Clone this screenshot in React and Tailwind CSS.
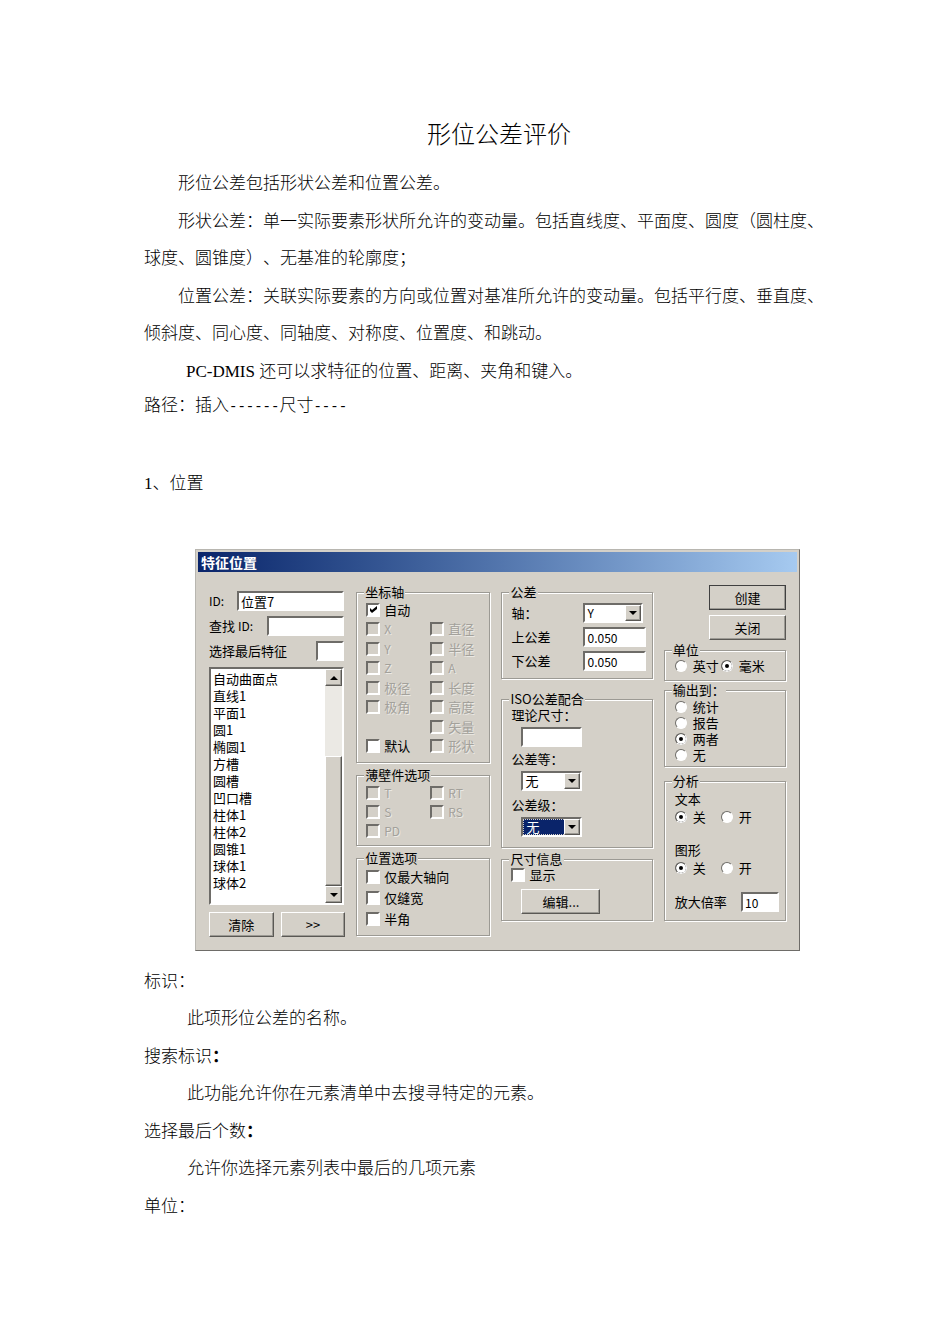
import { clsx } from 'clsx';

const SUNKEN = 'border-2 border-t-[#6e6c68] border-l-[#6e6c68] border-b-white border-r-white';
const RAISED = 'border border-t-white border-l-white border-b-[#5a5854] border-r-[#5a5854] shadow-[inset_-1px_-1px_0_#9c9a94]';

const FEATURES = [
  '自动曲面点', '直线1', '平面1', '圆1', '椭圆1', '方槽', '圆槽', '凹口槽',
  '柱体1', '柱体2', '圆锥1', '球体1', '球体2',
];

const AXES = [
  ['X', '直径'],
  ['Y', '半径'],
  ['Z', 'A'],
  ['极径', '长度'],
  ['极角', '高度'],
  [null, '矢量'],
];

const NOTES = [
  { term: '标识', text: '此项形位公差的名称。' },
  { term: '搜索标识', text: '此功能允许你在元素清单中去搜寻特定的元素。', bold: true },
  { term: '选择最后个数', text: '允许你选择元素列表中最后的几项元素', bold: true },
  { term: '单位' },
];

export default function App() {
  return (
    <main className="min-h-screen bg-white pt-[117px] pr-[126px] pb-[120px] pl-36 text-[17px] leading-[37px] font-light text-black font-['Liberation_Serif','Noto_Sans_CJK_SC',serif] [text-spacing-trim:space-all]">
      <h1 className="pl-[30px] text-center text-2xl leading-[37px]">形位公差评价</h1>

      <div className="mt-[11px] flex flex-col gap-px">
        <p className="indent-[2em]">形位公差包括形状公差和位置公差。</p>
        <p className="indent-[2em]">
          形状公差：单一实际要素形状所允许的变动量。包括直线度、平面度、圆度（圆柱度、球度、圆锥度）、无基准的轮廓度；
        </p>
        <p className="indent-[2em]">
          位置公差：关联实际要素的方向或位置对基准所允许的变动量。包括平行度、垂直度、倾斜度、同心度、同轴度、对称度、位置度、和跳动。
        </p>
        <p className="pl-[42px]">PC-DMIS 还可以求特征的位置、距离、夹角和键入。</p>
      </div>
      <p className="leading-8">
        路径：插入<Dashes>------</Dashes>尺寸<Dashes>----</Dashes>
      </p>

      <h2 className="mt-[43px]">1、位置</h2>

      <PositionDialog />

      <dl className="mt-3 flex flex-col gap-px">
        {NOTES.map((note) => (
          <div key={note.term}>
            <dt>
              {note.term}
              <span className={clsx(note.bold && 'font-bold')}>：</span>
            </dt>
            {note.text && <dd className="pl-[43px]">{note.text}</dd>}
          </div>
        ))}
      </dl>
    </main>
  );
}

function Dashes({ children }) {
  return <span className="text-sm font-['Liberation_Mono',monospace]">{children}</span>;
}

function PositionDialog() {
  return (
    <section
      aria-labelledby="dialog-title"
      className="mt-[47px] mr-6 ml-[51px] border border-t-[#b8b6b0] border-l-[#b8b6b0] border-r-[#6e6c68] border-b-[#6e6c68] bg-[#d4d0c8] p-0.5 text-[13px] leading-4 font-normal font-['Noto_Sans_CJK_SC',sans-serif]"
    >
      <h3
        id="dialog-title"
        className="bg-linear-to-r from-[#0a246a] to-[#a6caf0] px-[3px] text-sm leading-5 font-bold text-white"
      >
        特征位置
      </h3>
      <form
        className="grid grid-cols-[136fr_134fr_151fr_122fr] gap-[11px] px-[11px] pt-3 pb-[11px]"
        onSubmit={(e) => e.preventDefault()}
      >
        <FeatureColumn />
        <OptionsColumn />
        <ToleranceColumn />
        <OutputColumn />
      </form>
    </section>
  );
}

// 特征列表
function FeatureColumn() {
  return (
    <div className="flex min-w-0 flex-col pt-[7px]">
      <div className="mr-px flex flex-col gap-[5px]">
        <div className="flex items-center">
          <label htmlFor="fid" className="w-7 text-xs">ID:</label>
          <TextBox id="fid" defaultValue="位置7" className="flex-1 text-[13px]" />
        </div>
        <div className="flex items-center">
          <label htmlFor="find" className="w-[58px]">
            查找 <span className="text-xs">ID:</span>
          </label>
          <TextBox id="find" className="flex-1" />
        </div>
        <div className="flex items-center justify-between">
          <label htmlFor="last">选择最后特征</label>
          <TextBox id="last" className="w-7" />
        </div>
      </div>

      <div className={clsx('mt-[6px] mr-px flex bg-white', SUNKEN)}>
        <select
          size={13}
          aria-label="特征列表"
          className="h-[234px] min-w-0 flex-1 appearance-none overflow-hidden border-0 bg-white p-0 outline-none [scrollbar-width:none]"
        >
          {FEATURES.map((name) => (
            <option key={name} className="h-[17px] min-h-0 p-0 px-0.5 leading-4">{name}</option>
          ))}
        </select>
        <div className="flex w-[17px] flex-col bg-[#ebe9e4]">
          <button type="button" aria-label="向上" className={clsx('grid h-[17px] place-items-center bg-[#d4d0c8]', RAISED)}>
            <Arrow up />
          </button>
          <div className="flex-1" />
          <div className={clsx('h-[130px] bg-[#d4d0c8]', RAISED)} />
          <button type="button" aria-label="向下" className={clsx('grid h-[17px] place-items-center bg-[#d4d0c8]', RAISED)}>
            <Arrow />
          </button>
        </div>
      </div>

      <div className="mt-[7px] grid grid-cols-2 gap-[7px]">
        <PushButton>清除</PushButton>
        <PushButton>&gt;&gt;</PushButton>
      </div>
    </div>
  );
}

function OptionsColumn() {
  return (
    <div className="flex min-w-0 flex-col gap-1">
      <Group title="坐标轴">
        <div className="grid h-[156px] auto-rows-fr grid-cols-[64px_1fr] items-center">
          <CheckBox label="自动" checked className="col-span-2" />
          {AXES.map(([left, right]) => [
            left ? <CheckBox key={left} label={left} disabled /> : <span key="empty" />,
            <CheckBox key={right} label={right} disabled />,
          ])}
          <CheckBox label="默认" />
          <CheckBox label="形状" disabled />
        </div>
        <div className="h-[6px]" />
      </Group>
      <Group title="薄壁件选项">
        <div className="grid h-[58px] auto-rows-fr grid-cols-[64px_1fr] items-center">
          <CheckBox label="T" disabled />
          <CheckBox label="RT" disabled />
          <CheckBox label="S" disabled />
          <CheckBox label="RS" disabled />
          <CheckBox label="PD" disabled />
        </div>
        <div className="h-1" />
      </Group>
      <Group title="位置选项">
        <div className="grid h-[63px] auto-rows-fr items-center">
          <CheckBox label="仅最大轴向" />
          <CheckBox label="仅缝宽" />
          <CheckBox label="半角" />
        </div>
        <div className="h-[6px]" />
      </Group>
    </div>
  );
}

function ToleranceColumn() {
  return (
    <div className="flex min-w-0 flex-col">
      <Group title="公差">
        <div className="flex flex-col gap-1 pt-[3px] pb-[7px]">
          <Field id="axis" label="轴：">
            <ComboBox id="axis" value="Y" className="mr-[3px] flex-1 text-xs" />
          </Field>
          <Field id="upper" label="上公差">
            <TextBox id="upper" defaultValue="0.050" className="flex-1" />
          </Field>
          <Field id="lower" label="下公差">
            <TextBox id="lower" defaultValue="0.050" className="flex-1" />
          </Field>
        </div>
      </Group>

      <Group title="ISO公差配合" className="mt-3">
        <div className="flex flex-col items-start gap-1 pb-[10px]">
          <label htmlFor="nominal">理论尺寸：</label>
          <TextBox id="nominal" className="ml-[10px] w-[61px]" />
          <label htmlFor="grade">公差等：</label>
          <ComboBox id="grade" value="无" className="ml-[10px] w-[61px]" />
          <label htmlFor="level" className="mt-0.5">公差级：</label>
          <ComboBox id="level" value="无" selected className="ml-[10px] w-[61px]" />
        </div>
      </Group>

      <Group title="尺寸信息" className="mt-[3px]">
        <CheckBox label="显示" />
        <PushButton className="mt-[6px] mb-[6px] ml-[10px] w-[79px]">编辑...</PushButton>
      </Group>
    </div>
  );
}

function OutputColumn() {
  return (
    <div className="flex min-w-0 flex-col pt-px">
      <div className="ml-[45px] flex flex-col gap-[5px]">
        <PushButton primary>创建</PushButton>
        <PushButton>关闭</PushButton>
      </div>

      <Group title="单位" className="mt-0.5">
        <div className="grid grid-cols-[46px_1fr] pb-[6px] pl-px">
          <Radio name="unit" label="英寸" />
          <Radio name="unit" label="毫米" checked />
        </div>
      </Group>

      <Group title="输出到：" className="mt-px">
        <div className="flex flex-col pt-px pb-[3px] pl-px">
          <Radio name="output" label="统计" />
          <Radio name="output" label="报告" />
          <Radio name="output" label="两者" checked />
          <Radio name="output" label="无" />
        </div>
      </Group>

      <Group title="分析" className="mt-[6px]">
        <div className="pt-0.5 pb-2 pl-px">
          <OnOff name="text" title="文本" />
          <div className="h-[17px]" />
          <OnOff name="graph" title="图形" />
          <div className="mt-4 flex items-center justify-between">
            <label htmlFor="scale">放大倍率</label>
            <TextBox id="scale" defaultValue="10" className="w-[38px]" />
          </div>
        </div>
      </Group>
    </div>
  );
}

function OnOff({ name, title }) {
  return (
    <div role="radiogroup" aria-label={title}>
      <p>{title}</p>
      <div className="grid grid-cols-[46px_1fr] pt-0.5">
        <Radio name={name} label="关" checked />
        <Radio name={name} label="开" />
      </div>
    </div>
  );
}

function Group({ title, className, children }) {
  return (
    <fieldset
      className={clsx(
        'min-w-0 border border-[#9c9a94] pr-[6px] pl-[9px] shadow-[1px_1px_0_#fff,inset_1px_1px_0_#fff]',
        className
      )}
    >
      <legend className="-ml-0.5 bg-[#d4d0c8] px-px leading-4">{title}</legend>
      {children}
    </fieldset>
  );
}

function Field({ id, label, children }) {
  return (
    <div className="flex items-center">
      <label htmlFor={id} className="w-[72px]">{label}</label>
      {children}
    </div>
  );
}

function TextBox({ className, ...props }) {
  return (
    <input
      type="text"
      className={clsx('h-5 min-w-0 bg-white px-0.5 text-xs outline-none', SUNKEN, className)}
      {...props}
    />
  );
}

function ComboBox({ id, value, selected, className }) {
  return (
    <div className={clsx('grid h-5 min-w-0 bg-white', SUNKEN, className)}>
      <select
        id={id}
        className={clsx(
          'col-start-1 row-start-1 h-4 w-full appearance-none pl-0.5 outline-none',
          selected ? 'border border-dotted border-[#d4d0c8] bg-[#0a246a] leading-[14px] text-white' : 'leading-4'
        )}
      >
        <option>{value}</option>
      </select>
      <span className={clsx('pointer-events-none col-start-1 row-start-1 grid w-4 place-items-center justify-self-end bg-[#d4d0c8]', RAISED)}>
        <Arrow />
      </span>
    </div>
  );
}

function CheckBox({ label, checked, disabled, className }) {
  return (
    <label className={clsx('flex items-center gap-1', disabled && 'text-[#a3a19b] [text-shadow:1px_1px_0_#ebe9e4]', className)}>
      <span className="grid">
        <input
          type="checkbox"
          defaultChecked={checked}
          disabled={disabled}
          className={clsx('peer col-start-1 row-start-1 size-[14px] appearance-none', SUNKEN, disabled ? 'bg-[#d4d0c8]' : 'bg-white')}
        />
        <svg viewBox="0 0 7 7" className="pointer-events-none invisible col-start-1 row-start-1 size-[7px] place-self-center peer-checked:visible">
          <path d="M0 2v3l2 2 5-4V0L2 4z" />
        </svg>
      </span>
      <span className={clsx('leading-4', /^[A-Z]+$/.test(label) && 'text-xs')}>{label}</span>
    </label>
  );
}

function Radio({ name, label, checked }) {
  return (
    <label className="flex items-center gap-[6px] leading-4">
      <input
        type="radio"
        name={name}
        defaultChecked={checked}
        className="size-3 shrink-0 appearance-none rounded-full border border-t-[#6e6c68] border-l-[#6e6c68] border-b-white border-r-white bg-white checked:bg-black checked:shadow-[inset_0_0_0_3px_#fff]"
      />
      <span className="whitespace-nowrap">{label}</span>
    </label>
  );
}

function PushButton({ primary, className, children }) {
  return (
    <button
      type="button"
      className={clsx('h-[25px] bg-[#d4d0c8] leading-4', RAISED, primary && 'outline outline-[#404040] -outline-offset-1', className)}
    >
      {children}
    </button>
  );
}

function Arrow({ up }) {
  return (
    <svg viewBox="0 0 8 4" className={clsx('h-1 w-2', up && 'rotate-180')}>
      <path d="M0 0h8L4 4z" />
    </svg>
  );
}
